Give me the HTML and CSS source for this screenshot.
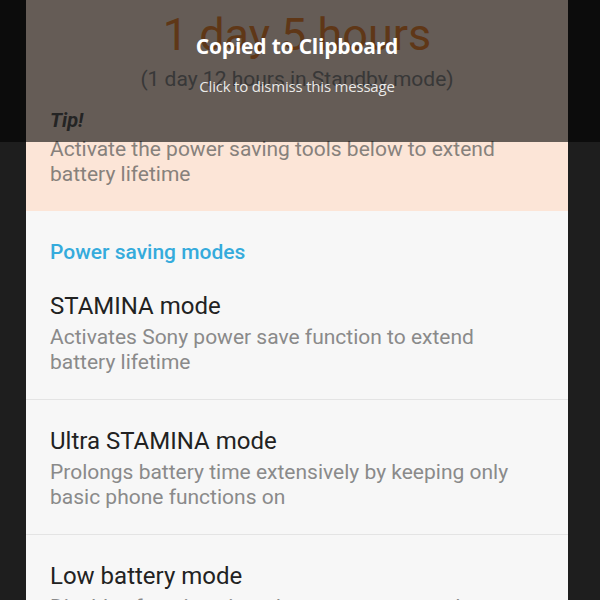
FILE: index.html
```html
<!DOCTYPE html>
<html>
<head>
<meta charset="utf-8">
<link rel="stylesheet" href="styles.css">
</head>
<body>
<div class="screen">
  <section class="summary">
    <div class="hero">1 day 5 hours</div>
    <div class="standby">(1 day 12 hours in Standby mode)</div>
    <div class="tip-label">Tip!</div>
    <div class="tip-text">Activate the power saving tools below to extend battery lifetime</div>
  </section>
  <div class="section-header">Power saving modes</div>
  <div class="item">
    <div class="item-title">STAMINA mode</div>
    <div class="item-desc">Activates Sony power save function to extend battery lifetime</div>
  </div>
  <div class="item">
    <div class="item-title">Ultra STAMINA mode</div>
    <div class="item-desc">Prolongs battery time extensively by keeping only basic phone functions on</div>
  </div>
  <div class="item">
    <div class="item-title">Low battery mode</div>
    <div class="item-desc">Disables functions in order to save power when battery is low</div>
  </div>
</div>
<div class="toast">
  <div class="toast-title">Copied to Clipboard</div>
  <div class="toast-sub">Click to dismiss this message</div>
</div>
</body>
</html>
```
FILE: styles.css
```css
html, body {
  margin: 0;
  padding: 0;
}
body {
  width: 600px;
  height: 600px;
  overflow: hidden;
  background: #1e1e1e;
  font-family: Roboto, "Liberation Sans", sans-serif;
  position: relative;
}
.screen {
  margin-left: 26px;
  width: 542px;
  height: 600px;
  overflow: hidden;
  background: #f7f7f7;
}
.summary {
  background: #fce5d7;
  padding: 8px 24px 24px;
}
.hero {
  text-align: center;
  font-size: 45px;
  line-height: 54px;
  color: #ee8a3a;
  font-weight: 400;
}
.standby {
  margin-top: 4px;
  text-align: center;
  font-size: 21px;
  line-height: 26px;
  color: #8c8c8c;
}
.tip-label {
  margin-top: 16px;
  font-size: 20px;
  line-height: 25px;
  font-style: italic;
  font-weight: 700;
  color: #5a5a5a;
}
.tip-text {
  margin-top: 4px;
  font-size: 21px;
  line-height: 25px;
  color: #87817c;
}
.section-header {
  padding: 29px 24px 0;
  font-size: 21px;
  line-height: 25px;
  font-weight: 500;
  color: #35abdc;
}
.item {
  padding: 26px 24px 24px;
  border-bottom: 1px solid #e4e4e4;
}
.item-title {
  font-size: 24px;
  line-height: 30px;
  color: #222;
}
.item-desc {
  margin-top: 4px;
  font-size: 21px;
  line-height: 25px;
  color: #8a8a8a;
}
.toast {
  position: absolute;
  top: 0;
  left: 0;
  width: 600px;
  height: 142px;
  background: rgba(0, 0, 0, 0.6);
  text-align: center;
  font-family: "Open Sans", "DejaVu Sans", sans-serif;
  color: #fff;
  box-sizing: border-box;
  padding-right: 6px;
}
.toast-title {
  padding-top: 32px;
  font-size: 21px;
  line-height: 28px;
  font-weight: 700;
  letter-spacing: -0.2px;
}
.toast-sub {
  margin-top: 16px;
  font-size: 15px;
  line-height: 20px;
  color: rgba(255, 255, 255, 0.88);
  letter-spacing: -0.2px;
}
```
